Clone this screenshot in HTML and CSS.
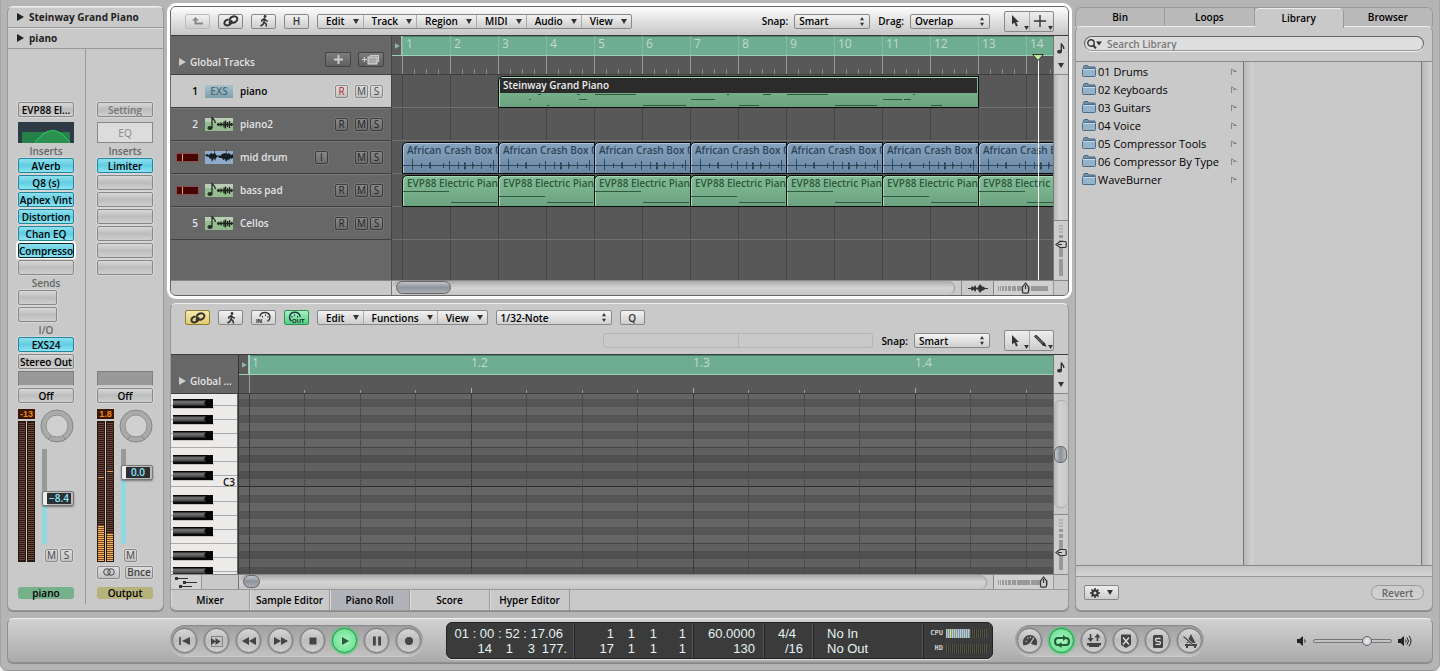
FILE: index.html
```html
<!DOCTYPE html>
<html lang="en">
<head>
<meta charset="utf-8">
<title>Arrange</title>
<link rel="stylesheet" href="styles.css">
</head>
<body>
<svg class="defs" aria-hidden="true">
  <symbol id="caret" viewBox="0 0 6 5"><path d="M0 0h6L3 5z" fill="#333"/></symbol>
  <symbol id="updown" viewBox="0 0 4 9"><path d="M0 3.2 2 0l2 3.2zM0 5.8 2 9l2-3.2z" fill="#333"/></symbol>
  <symbol id="tri" viewBox="0 0 7 8"><path d="M0 0l7 4-7 4z" fill="currentColor"/></symbol>
  <symbol id="link" viewBox="0 0 16 12"><g fill="none" stroke="currentColor" stroke-width="2"><ellipse cx="10.500" cy="4.500" rx="4" ry="3" transform="rotate(-25 10.500 4.500)"/><path d="M9 5.500 6 8.500M5.500 4.500C3 4.500 1.200 6.500 1.400 8.500s3 2.500 5.100 1.200 2.500-2.200 2.300-3.700"/></g></symbol>
  <symbol id="run" viewBox="0 0 10 12"><circle cx="6" cy="1.500" r="1.400" fill="#333"/><path d="M5.500 3.200 5 7.200M5.400 3.600 2.800 5.200v1.600M5.600 4l1.800 1.700 1.600.2M5 7l-1 2.400L1.500 11M5 7l2 1.900.5 2.600" fill="none" stroke="#333" stroke-width="1.500"/></symbol>
  <symbol id="note" viewBox="0 0 8 11"><ellipse cx="2.500" cy="8.700" rx="2.400" ry="1.900" fill="#333"/><path d="M4.300 8.700V.5c.4 2 3 2.700 2.500 5.500" fill="none" stroke="#333" stroke-width="1.400"/></symbol>
  <symbol id="pointer" viewBox="0 0 9 12"><path d="M1 0v9.500l2.300-2L5 11.500l1.800-.8L5.200 7H8z" fill="#333"/></symbol>
  <symbol id="miditrack" viewBox="0 0 28 16">
    <rect y="2" width="28" height="13" fill="#95bc91"/><rect y="2" width="28" height="4" fill="#b8cdb4"/>
    <path d="M7 12V1c.8 2.500 3.500 3 3.400 6" fill="none" stroke="#233023" stroke-width="1.300"/><ellipse cx="5" cy="12" rx="2.600" ry="2" fill="#233023"/>
    <path d="M12 8.500h16M13.500 7v3M16 6.500v4M19 5.500v6M20.500 4.500v8M22.500 6v5M24.500 5v7M26.500 7v3" stroke="#1c241c" stroke-width="1.300"/>
  </symbol>
  <symbol id="audiotrack" viewBox="0 0 28 16">
    <rect y="2" width="28" height="13" fill="#8fadca"/>
    <path d="M9.500 0v6M21.500 0v6" stroke="#555"/>
    <path d="M0 6l2-1 2 1 2-2 2 1 2-1 2 3 1-1 2 1 2-2 3-1 2 1 2-1 2 2 2-1v4l-2 1-1-1-1 3-1-2-2 3-1-3-2 1-1-2-3 0-1-2-2 2-1 3-1-3-2 4-1-4-1 1-2-3-1 1z" fill="#151c24"/>
  </symbol>
  <symbol id="drumwave" viewBox="0 0 94 16"><path d="M0 8.500h94M9.500 2v11M18.500 6v5M27.500 5v7M26.500 6v5M40.500 6v5M46.500 4v9M55.500 5v7M61.500 5v8M62.500 6v6M69.500 5v7M70.500 7v3M78.500 5v7M87.500 7v4M90.500 3v10" stroke="#34485c" fill="none"/></symbol>
  <symbol id="bassA" viewBox="0 0 94 16"><path d="M0 1.500h46M48 12.500h46" stroke="#2f5a40"/></symbol>
  <symbol id="bassB" viewBox="0 0 94 16"><path d="M0 6.500h46M48 12.500h46" stroke="#2f5a40"/></symbol>
  <symbol id="vzoom" viewBox="0 0 13 52">
    <path d="M5 1h4M5 4h4M5 7h4" stroke="#999" stroke-width="1"/><path d="M5 10h4v3H5zM5 15h4v4H5zM5 21h4v11H5zM5 34h4v17H5z" fill="#999"/></symbol>
  <symbol id="vthumb" viewBox="0 0 12 9"><path d="M1 4.500 5 1.500h5q1.200 0 1.200 1.200v3.600q0 1.200-1.200 1.200H5zM3 4.500h4" fill="#ccc" stroke="#333" stroke-width="1.200"/></symbol>
  <symbol id="hzoom" viewBox="0 0 50 5"><path d="M.5 0v5M2.500 0v5" stroke="#999"/><path d="M4 0h2v5H4zM7 0h2v5H7zM10 0h3v5h-3zM14 0h4v5h-4zM19 0h13v5H19zM33 0h17v5H33z" fill="#999"/></symbol>
  <symbol id="hthumb" viewBox="0 0 9 12"><path d="M4.500 1 1.500 5v5q0 1.200 1.200 1.200h3.600q1.200 0 1.200-1.200V5zM4.500 3v4" fill="#ccc" stroke="#333" stroke-width="1.200"/></symbol>
  <symbol id="folder" viewBox="0 0 14 12"><path d="M1.500 2.500V1.300L2.300.5h3.400l1 1.500H13v2H1.500z" fill="#6f93ad" stroke="#47677f"/><rect x=".5" y="3.500" width="13" height="8" rx="1" fill="#93b4ca" stroke="#4d6c85"/><path d="M1 4.500h12" stroke="#c4dae6"/></symbol>
  <symbol id="flag" viewBox="0 0 6 7"><path d="M.5 7V1L5.500 3.500H2" fill="none" stroke="#888"/></symbol>
</svg>

<div class="app">
  <div class="workspace">

    <aside class="strip panel">
      <button class="strip-head"><svg width="7" height="8"><use href="#tri"/></svg>Steinway Grand Piano</button>
      <button class="strip-head"><svg width="7" height="8"><use href="#tri"/></svg>piano</button>
      <div class="channels">
        <section class="channel">
          <button class="slot">EVP88 El...</button>
          <svg class="eq" viewBox="0 0 56 21" width="56" height="21"><rect width="56" height="21" fill="#303b48"/><rect x="4" y="10" width="48" height="11" fill="#26804a"/><path d="M17 21C27 6 40 3 52 21" fill="#2b9150" stroke="#32d162"/></svg>
          <h3>Inserts</h3>
          <div class="slots">
            <button class="slot on">AVerb</button><button class="slot on">Q8 (s)</button><button class="slot on">Aphex Vint</button><button class="slot on">Distortion</button><button class="slot on">Chan EQ</button><button class="slot on focus">Compresso</button><button class="slot" aria-label="Empty insert"></button>
          </div>
          <h3>Sends</h3>
          <div class="slots half"><button class="slot" aria-label="Send 1"></button><button class="slot" aria-label="Send 2"></button></div>
          <h3>I/O</h3>
          <div class="slots"><button class="slot on">EXS24</button><button class="slot">Stereo Out</button></div>
          <div class="lower">
            <div class="group"></div>
            <button class="slot">Off</button>
            <div class="levels">
              <div class="meters"><output class="peak">-13</output><div class="bars"><i></i><i></i></div></div>
              <div class="level-side">
                <svg class="knob" width="34" height="34" viewBox="0 0 34 34"><circle cx="17" cy="17" r="16" fill="#aaa" stroke="#858585"/><circle cx="17" cy="17" r="11" fill="#d0d0d0" stroke="#909090"/><path d="M11 27l-3 4M23 27l3 4" stroke="#858585"/></svg>
                <div class="fader" style="--v:47"><input type="range" min="0" max="100" value="47" aria-label="piano volume"><output>−8.4</output></div>
                <div class="ms"><button class="mini light">M</button><button class="mini light">S</button></div>
              </div>
            </div>
            <div class="out-row"></div>
            <div class="name green">piano</div>
          </div>
        </section>
        <section class="channel">
          <button class="slot dim">Setting</button>
          <button class="eq-off">EQ</button>
          <h3>Inserts</h3>
          <div class="slots">
            <button class="slot on">Limiter</button><button class="slot" aria-label="Empty insert"></button><button class="slot" aria-label="Empty insert"></button><button class="slot" aria-label="Empty insert"></button><button class="slot" aria-label="Empty insert"></button><button class="slot" aria-label="Empty insert"></button><button class="slot" aria-label="Empty insert"></button>
          </div>
          <div class="lower">
            <div class="group"></div>
            <button class="slot">Off</button>
            <div class="levels">
              <div class="meters"><output class="peak">1.8</output><div class="bars"><i class="lit-a"></i><i class="lit-b"></i></div></div>
              <div class="level-side">
                <svg class="knob" width="34" height="34" viewBox="0 0 34 34"><circle cx="17" cy="17" r="16" fill="#aaa" stroke="#858585"/><circle cx="17" cy="17" r="11" fill="#d0d0d0" stroke="#909090"/><path d="M11 27l-3 4M23 27l3 4" stroke="#858585"/></svg>
                <div class="fader" style="--v:80"><input type="range" min="0" max="100" value="80" aria-label="Output volume"><output>0.0</output></div>
                <div class="ms"><button class="mini light">M</button></div>
              </div>
            </div>
            <div class="out-row"><button class="mini light wide" aria-label="Stereo"><svg width="12" height="8" viewBox="0 0 12 8" fill="none" stroke="#444"><circle cx="4" cy="4" r="3.300"/><circle cx="8" cy="4" r="3.300"/></svg></button><button class="mini light bnce">Bnce</button></div>
            <div class="name olive">Output</div>
          </div>
        </section>
      </div>
    </aside>

    <main class="center">
      <section class="arrange">
        <div class="toolbar">
          <button class="tool faded" aria-label="Up"><svg width="11" height="9" viewBox="0 0 11 9"><path d="M3.500 7.500H11v-2H4.500v-2H7L3.500 0 0 3.500h2.500v4z" fill="#888"/></svg></button>
          <button class="tool" aria-label="Link"><svg width="16" height="12"><use href="#link"/></svg></button>
          <button class="tool" aria-label="Catch"><svg width="10" height="12"><use href="#run"/></svg></button>
          <button class="tool">H</button>
          <div class="menus">
            <button>Edit<svg width="6" height="5"><use href="#caret"/></svg></button><button>Track<svg width="6" height="5"><use href="#caret"/></svg></button><button>Region<svg width="6" height="5"><use href="#caret"/></svg></button><button>MIDI<svg width="6" height="5"><use href="#caret"/></svg></button><button>Audio<svg width="6" height="5"><use href="#caret"/></svg></button><button>View<svg width="6" height="5"><use href="#caret"/></svg></button>
          </div>
          <div class="right-tools">
            <label for="snap">Snap:</label><span class="pick w76"><select id="snap"><option>Smart</option></select><svg width="4" height="9"><use href="#updown"/></svg></span>
            <label for="drag">Drag:</label><span class="pick w80"><select id="drag"><option>Overlap</option></select><svg width="4" height="9"><use href="#updown"/></svg></span>
            <div class="pointer-tools"><button aria-label="Pointer tool"><svg width="9" height="12"><use href="#pointer"/></svg><svg class="drop" width="5" height="4"><use href="#caret"/></svg></button><button aria-label="Marquee tool"><svg width="12" height="12" viewBox="0 0 12 12"><path d="M6 0v12M0 6h12" stroke="#333" stroke-width="1.400"/></svg><svg class="drop" width="5" height="4"><use href="#caret"/></svg></button></div>
          </div>
        </div>

        <div class="arrange-grid">
          <div class="headers">
            <div class="global">
              <svg width="7" height="8"><use href="#tri"/></svg><span>Global Tracks</span>
              <button aria-label="Add track"><svg width="9" height="9" viewBox="0 0 9 9"><path d="M4.500 0v9M0 4.500h9" stroke="#ccc" stroke-width="2"/></svg></button>
              <button aria-label="Duplicate track"><svg width="18" height="11" viewBox="0 0 18 11"><path d="M0 5.500h5M2.500 3v5M8.500 2.500v-1h8v6h-1" stroke="#ccc" fill="none" stroke-width="1.200"/><rect x="6" y="3" width="9" height="7" fill="#aaa" stroke="#ddd"/></svg></button>
            </div>
            <div class="track selected"><span class="num">1</span><span class="exs">EXS</span><span class="tname">piano</span><span></span><button class="mini m rec">R</button><button class="mini m">M</button><button class="mini">S</button></div>
            <div class="track"><span class="num">2</span><svg width="28" height="16"><use href="#miditrack"/></svg><span class="tname">piano2</span><span></span><button class="mini m">R</button><button class="mini m">M</button><button class="mini">S</button></div>
            <div class="track"><span class="clip"></span><svg width="28" height="16"><use href="#audiotrack"/></svg><span class="tname">mid drum</span><button class="mini">I</button><span></span><button class="mini m">M</button><button class="mini">S</button></div>
            <div class="track"><span class="clip"></span><svg width="28" height="16"><use href="#miditrack"/></svg><span class="tname">bass pad</span><span></span><button class="mini m">R</button><button class="mini m">M</button><button class="mini">S</button></div>
            <div class="track"><span class="num">5</span><svg width="28" height="16"><use href="#miditrack"/></svg><span class="tname">Cellos</span><span></span><button class="mini m">R</button><button class="mini m">M</button><button class="mini">S</button></div>
          </div>
          <div class="timeline">
            <div class="ruler">
              <div class="cycle"><span class="start"><svg width="5" height="8"><use href="#tri"/></svg></span><span>1</span><span>2</span><span>3</span><span>4</span><span>5</span><span>6</span><span>7</span><span>8</span><span>9</span><span>10</span><span>11</span><span>12</span><span>13</span><span>14</span></div>
              <div class="ticks"></div>
            </div>
            <div class="lanes">
              <div class="lane"><div class="region piano"><b>Steinway Grand Piano</b><svg width="479" height="14" viewBox="0 0 479 14"><path d="M39 1.500h3M78 1.500h3M96 1.500h41M228 1.500h2M264 1.500h8M288 1.500h41M414 1.500h2M30 6.500h2M80 6.500h8M192 6.500h24M384 6.500h19M405 6.500h7M48 12.500h2M144 12.500h43M240 12.500h20M336 12.500h42M432 12.500h11" stroke="#2f5a40"/></svg></div></div>
              <div class="lane"></div>
              <div class="lane">
                <div class="region blue"><span>African Crash Box 0</span><svg width="94" height="16"><use href="#drumwave"/></svg></div><div class="region blue"><span>African Crash Box 0</span><svg width="94" height="16"><use href="#drumwave"/></svg></div><div class="region blue"><span>African Crash Box 0</span><svg width="94" height="16"><use href="#drumwave"/></svg></div><div class="region blue"><span>African Crash Box 0</span><svg width="94" height="16"><use href="#drumwave"/></svg></div><div class="region blue"><span>African Crash Box 0</span><svg width="94" height="16"><use href="#drumwave"/></svg></div><div class="region blue"><span>African Crash Box 0</span><svg width="94" height="16"><use href="#drumwave"/></svg></div><div class="region blue"><span>African Crash Box 0</span><svg width="94" height="16"><use href="#drumwave"/></svg></div>
              </div>
              <div class="lane">
                <div class="region"><span>EVP88 Electric Piano</span><svg width="94" height="16"><use href="#bassA"/></svg></div><div class="region"><span>EVP88 Electric Piano</span><svg width="94" height="16"><use href="#bassB"/></svg></div><div class="region"><span>EVP88 Electric Piano</span><svg width="94" height="16"><use href="#bassA"/></svg></div><div class="region"><span>EVP88 Electric Piano</span><svg width="94" height="16"><use href="#bassB"/></svg></div><div class="region"><span>EVP88 Electric Piano</span><svg width="94" height="16"><use href="#bassA"/></svg></div><div class="region"><span>EVP88 Electric Piano</span><svg width="94" height="16"><use href="#bassB"/></svg></div><div class="region"><span>EVP88 Electric Piano</span><svg width="94" height="16"><use href="#bassA"/></svg></div>
              </div>
              <div class="lane"></div>
            </div>
            <div class="playhead"><svg width="12" height="7" viewBox="0 0 12 7"><path d="M.5.5h11L6 6.500z" fill="#b7ee93" stroke="#333"/></svg></div>
          </div>
          <div class="side">
            <div class="side-menu"><svg width="8" height="11"><use href="#note"/></svg><svg width="6" height="5"><use href="#caret"/></svg></div>
            <div class="vscroll"></div>
            <div class="vzoom"><svg width="13" height="52"><use href="#vzoom"/></svg><svg class="vthumb a" width="12" height="9"><use href="#vthumb"/></svg><input type="range" aria-label="Vertical zoom"></div>
          </div>
          <div class="foot-left"></div>
          <div class="foot">
            <div class="hscroll"><i class="long"></i></div>
            <div class="wavecell"><svg width="20" height="11" viewBox="0 0 20 11"><path d="M0 5.500h20" stroke="#333"/><path d="M2.500 5.500 4 3l1.500 1.500L7 2l2 3.500L12 1l2 2.500 1 0 3 2-3 2h-1L12 10 9 5.500 7 9 5.500 6.500 4 8z" fill="#333"/></svg></div>
            <div class="hzoom"><svg width="50" height="5"><use href="#hzoom"/></svg><svg class="hthumb a" width="9" height="12"><use href="#hthumb"/></svg><input type="range" aria-label="Horizontal zoom"></div>
          </div>
          <div class="corner"></div>
        </div>
      </section>

      <section class="editor panel">
        <div class="etools">
          <div class="erow">
            <button class="tool yellow" aria-label="Link"><svg width="16" height="12"><use href="#link"/></svg></button>
            <button class="tool" aria-label="Catch"><svg width="10" height="12"><use href="#run"/></svg></button>
            <button class="tool" aria-label="MIDI in"><svg width="18" height="13" viewBox="0 0 18 13"><path d="M5 5.500C5.500 0 14.500 0 15 6c0 2-1 3.500-2.500 4.500" fill="none" stroke="#333" stroke-width="1.400"/><path d="M7.500 5v1.500M10.500 3.500V5M13 5v1.500" stroke="#333"/><text x="1" y="12">IN</text></svg></button>
            <button class="tool greenb" aria-label="MIDI out"><svg width="20" height="13" viewBox="0 0 20 13"><path d="M4.500 10C1 7.500 2.500 1.200 7.500 1.200c3.500 0 5.500 2 5.500 4.800" fill="none" stroke="#234" stroke-width="1.400"/><path d="M5 5v1.500M7.500 3.500V5M10.500 5v1.500" stroke="#234"/><text x="5" y="12">OUT</text></svg></button>
            <div class="menus">
              <button>Edit<svg width="6" height="5"><use href="#caret"/></svg></button><button>Functions<svg width="6" height="5"><use href="#caret"/></svg></button><button>View<svg width="6" height="5"><use href="#caret"/></svg></button>
            </div>
            <span class="pick w116"><select aria-label="Quantize"><option>1/32-Note</option></select><svg width="4" height="9"><use href="#updown"/></svg></span>
            <button class="tool">Q</button>
          </div>
          <div class="erow second">
            <div class="info"><i></i><i></i></div>
            <label for="snap2">Snap:</label><span class="pick w76"><select id="snap2"><option>Smart</option></select><svg width="4" height="9"><use href="#updown"/></svg></span>
            <div class="pointer-tools"><button aria-label="Pointer tool"><svg width="9" height="12"><use href="#pointer"/></svg><svg class="drop" width="5" height="4"><use href="#caret"/></svg></button><button aria-label="Pencil tool"><svg width="13" height="12" viewBox="0 0 13 12"><path d="M1 .5 10 9.500" stroke="#333" stroke-width="3"/><path d="M2 1.500 9 8.500" stroke="#888"/><path d="M8 10l2.500-2.500L12.500 12z" fill="#222"/></svg><svg class="drop" width="5" height="4"><use href="#caret"/></svg></button></div>
          </div>
        </div>
        <div class="roll">
          <div class="rollhead">
            <div class="global"><svg width="7" height="8"><use href="#tri"/></svg><span>Global ...</span></div>
            <svg class="keys" width="66" height="100%">
              <defs><linearGradient id="bk" x2="0" y2="1"><stop offset="0" stop-color="#222"/><stop offset=".3" stop-color="#777"/><stop offset=".8" stop-color="#4a4a4a"/><stop offset="1" stop-color="#111"/></linearGradient>
              <pattern id="oct" width="66" height="96" patternUnits="userSpaceOnUse" patternTransform="translate(1 -3)">
                <rect width="66" height="96" fill="#ecebe9"/>
                <path d="M0 14.500h66M0 28.500h66M0 42.500h66M0 56.500h66M0 70.500h66M0 84.500h66M0 95.500h66" stroke="#aaa"/>
                <path d="M1 16h41v2H1zM1 32h41v2H1zM1 48h41v2H1zM1 72h41v2H1zM1 88h41v2H1z" fill="#c4c3c1"/>
                <path d="M1 8h40v9H1zM1 24h40v9H1zM1 40h40v9H1zM1 64h40v9H1zM1 80h40v9H1z" fill="#080808"/>
                <g fill="url(#bk)"><rect x="1" y="9" width="33" height="6"/><rect x="1" y="25" width="33" height="6"/><rect x="1" y="41" width="33" height="6"/><rect x="1" y="65" width="33" height="6"/><rect x="1" y="81" width="33" height="6"/></g>
                <path d="M34 9l-2 3 2 3zM34 25l-2 3 2 3zM34 41l-2 3 2 3zM34 65l-2 3 2 3zM34 81l-2 3 2 3z" fill="#080808"/>
              </pattern></defs>
              <rect width="66" height="100%" fill="url(#oct)"/><text x="52" y="92">C3</text>
            </svg>
          </div>
          <div class="rollmain">
            <div class="ruler roll-ruler"><div class="cycle"><span class="start"><svg width="5" height="8"><use href="#tri"/></svg></span><span>1</span><span>1.2</span><span>1.3</span><span>1.4</span></div><div class="ticks"></div></div>
            <div class="notes"></div>
          </div>
          <div class="side">
            <div class="side-menu"><svg width="8" height="11"><use href="#note"/></svg><svg width="6" height="5"><use href="#caret"/></svg></div>
            <div class="vscroll"><i></i></div>
            <div class="vzoom"><svg width="13" height="52"><use href="#vzoom"/></svg><svg class="vthumb b" width="12" height="9"><use href="#vthumb"/></svg><input type="range" aria-label="Vertical zoom"></div>
          </div>
          <div class="foot-left"><button aria-label="Controllers"><svg width="22" height="11" viewBox="0 0 22 11"><path d="M0 1.500h13M8 5.500h14M4 9.500h13" stroke="#333" stroke-width="1.200"/><path d="M0 0h3v3H0zM8 4h3v3H8zM4 8h3v3H4z" fill="#333"/></svg></button></div>
          <div class="foot">
            <div class="hscroll"><i class="round"></i></div>
            <div class="hzoom"><svg width="50" height="5"><use href="#hzoom"/></svg><svg class="hthumb b" width="9" height="12"><use href="#hthumb"/></svg><input type="range" aria-label="Horizontal zoom"></div>
          </div>
          <div class="corner"></div>
        </div>
        <nav class="etabs"><button>Mixer</button><button>Sample Editor</button><button class="active">Piano Roll</button><button>Score</button><button>Hyper Editor</button></nav>
      </section>
    </main>

    <aside class="library">
      <nav class="ltabs"><button>Bin</button><button>Loops</button><button class="active">Library</button><button>Browser</button></nav>
      <div class="lbody">
        <div class="lsearch"><label for="search" aria-label="Search"><svg width="15" height="10" viewBox="0 0 15 10"><circle cx="4" cy="4" r="3.200" fill="none" stroke="#333" stroke-width="1.400"/><path d="M6.300 6.300 9 9.500" stroke="#333" stroke-width="2"/><path d="M9 2.500h6L12 6.500z" fill="#333"/></svg></label><input id="search" type="text" placeholder="Search Library"></div>
        <div class="lcols">
          <ul>
            <li><svg width="14" height="12"><use href="#folder"/></svg>01 Drums<svg class="flag" width="6" height="7"><use href="#flag"/></svg></li>
            <li><svg width="14" height="12"><use href="#folder"/></svg>02 Keyboards<svg class="flag" width="6" height="7"><use href="#flag"/></svg></li>
            <li><svg width="14" height="12"><use href="#folder"/></svg>03 Guitars<svg class="flag" width="6" height="7"><use href="#flag"/></svg></li>
            <li><svg width="14" height="12"><use href="#folder"/></svg>04 Voice<svg class="flag" width="6" height="7"><use href="#flag"/></svg></li>
            <li><svg width="14" height="12"><use href="#folder"/></svg>05 Compressor Tools<svg class="flag" width="6" height="7"><use href="#flag"/></svg></li>
            <li><svg width="14" height="12"><use href="#folder"/></svg>06 Compressor By Type<svg class="flag" width="6" height="7"><use href="#flag"/></svg></li>
            <li><svg width="14" height="12"><use href="#folder"/></svg>WaveBurner<svg class="flag" width="6" height="7"><use href="#flag"/></svg></li>
          </ul>
          <div class="gutter"></div><div></div><div class="gutter"></div>
        </div>
        <div class="lstrip"></div>
        <div class="lfoot"><button class="gear" aria-label="Actions"><svg width="10" height="10" viewBox="0 0 10 10"><circle cx="5" cy="5" r="2.500" fill="none" stroke="#333" stroke-width="2"/><path d="M5 0v2M5 8v2M0 5h2M8 5h2M1.500 1.500l1.400 1.400M7.100 7.100l1.400 1.400M8.500 1.500 7.100 2.900M2.900 7.100 1.500 8.500" stroke="#333" stroke-width="1.500"/></svg><svg width="6" height="5"><use href="#caret"/></svg></button><button class="revert">Revert</button></div>
      </div>
    </aside>
  </div>

  <footer class="transport">
    <div class="pill">
      <button aria-label="Go to beginning"><svg viewBox="0 0 16 16"><path d="M3 4v8" stroke="#444" stroke-width="1.500"/><path d="M13 4v8L5 8z" fill="#444"/></svg></button>
      <button aria-label="Play from selection"><svg viewBox="0 0 16 16"><path d="M2.500 3.500h11v10h-11z" fill="none" stroke="#444" stroke-dasharray="1 1"/><path d="M2 5v7l5-3.500zM6.500 5v7l5-3.500z" fill="#444"/></svg></button>
      <button aria-label="Rewind"><svg viewBox="0 0 16 16"><path d="M8 4v8L1 8zM15 4v8L8 8z" fill="#444"/></svg></button>
      <button aria-label="Forward"><svg viewBox="0 0 16 16"><path d="M1 4v8l7-4zM8 4v8l7-4z" fill="#444"/></svg></button>
      <button aria-label="Stop"><svg viewBox="0 0 16 16"><path d="M4.500 4.500h7v7h-7z" fill="#444"/></svg></button>
      <button class="lit" aria-label="Play"><svg viewBox="0 0 16 16"><path d="M5 4v8l7-4z" fill="#2a5b3c"/></svg></button>
      <button aria-label="Pause"><svg viewBox="0 0 16 16"><path d="M4 3.500h2.800v9H4zM9.200 3.500H12v9H9.200z" fill="#444"/></svg></button>
      <button aria-label="Record"><svg viewBox="0 0 16 16"><circle cx="8" cy="8" r="4" fill="#444"/></svg></button>
    </div>
    <div class="lcd">
      <div class="cell time"><span class="full">01 : 00 : 52 : 17.06</span><span>14</span><span>1</span><span>3</span><span>177.</span></div>
      <div class="cell locs"><span>1</span><span>1</span><span>1</span><span>1</span><span>17</span><span>1</span><span>1</span><span>1</span></div>
      <div class="cell tempo"><span>60.0000</span><span>130</span></div>
      <div class="cell sig"><span>4/4</span><span>/16</span></div>
      <div class="cell io"><span>No In</span><span>No Out</span></div>
      <div class="cell load"><span>CPU</span><i class="cpu"></i><span>HD</span><i></i></div>
    </div>
    <div class="pill">
      <button aria-label="Low latency"><svg viewBox="0 0 16 16"><path d="M1.500 12.500C-.5 7 3 2 8 2s8.500 5 6.500 10.500l-4-1Q8 9 5.500 11.500z" fill="#444"/><path d="M8 11l4-6.500M3.500 8l1.500.5M5.500 4.500l.8 1.300M8.500 3.500V5" stroke="#ccc" stroke-width="1.200"/></svg></button>
      <button class="lit" aria-label="Cycle"><svg viewBox="0 0 16 16"><path d="M6 12H4q-3 0-3-3.500T4 5h6M10 12h2q3 0 3-3.500T12 5M6 12h5" fill="none" stroke="#235b38" stroke-width="2"/><path d="M9 2l4 3-4 3zM7.500 9l-4 3 4 3z" fill="#235b38"/></svg></button>
      <button aria-label="Autopunch"><svg viewBox="0 0 16 16"><path d="M4.500 1v5M11.500 8V3" stroke="#444" stroke-width="1.600"/><path d="M1.500 5h6l-3 4zM8.500 4.500h6l-3-4zM1 10h14v2.500h-2V14H3v-1.500H1z" fill="#444"/></svg></button>
      <button aria-label="Replace"><svg viewBox="0 0 16 16"><path d="M4 1.500h8q1 0 1 1V11q0 1-1 1.500L8 15l-4-2.500Q3 12 3 11V2.500q0-1 1-1z" fill="#444"/><path d="M5 4.500l6 7M11 4.500l-6 7" stroke="#ddd" stroke-width="1.400"/></svg></button>
      <button aria-label="Solo"><svg viewBox="0 0 16 16"><rect x="3" y="2" width="10" height="13" rx="1.500" fill="#444"/><path d="M10.500 5.500h-4q-1 0-1 1.200t1 1.600l3 .4q1 .2 1 1.300t-1 1.300h-4" fill="none" stroke="#ddd" stroke-width="1.300"/></svg></button>
      <button aria-label="Metronome"><svg viewBox="0 0 16 16"><path d="M9 1l4.500 9h-9zM3 11h12v2H3zM4 13h2v2H4zM12 13h2v2h-2z" fill="#444"/><path d="M1.500 3.500 10 11" stroke="#ccc" stroke-width="2.400"/><path d="M1.500 3.500 10 11" stroke="#444" stroke-width="1.200"/></svg></button>
    </div>
    <div class="volume">
      <svg width="10" height="10" viewBox="0 0 10 10"><path d="M0 3h2.500L6 0v10L2.500 7H0z" fill="#222"/><path d="M7.500 3.500q1.500 1.500 0 3" fill="none" stroke="#222"/></svg>
      <input type="range" min="0" max="100" value="71" aria-label="Master volume">
      <svg width="14" height="12" viewBox="0 0 14 12"><path d="M0 4h2.500L6 1v10L2.500 8H0z" fill="#222"/><path d="M7.500 4.500q1.500 1.500 0 3M9 2.500q3 3.500 0 7M11 .8q4 5.200 0 10.400" fill="none" stroke="#222"/></svg>
    </div>
  </footer>
</div>
</body>
</html>
```
FILE: styles.css
```css
* { box-sizing: border-box; }
body, h3, ul { margin: 0; padding: 0; }
body {
  background: #eee;
  font: 600 10px/12px "Open Sans", "Noto Sans", sans-serif;
  color: #000;
}
button, input, select {
  font: inherit; color: inherit; margin: 0; padding: 0;
  border: 0; background: none; border-radius: 0;
}
button { display: flex; align-items: center; justify-content: center; white-space: nowrap; overflow: hidden; }
svg { display: block; flex: none; }
.defs { position: absolute; width: 0; height: 0; }

.app {
  min-height: 100vh; display: flex; flex-direction: column; gap: 7px;
  padding: 6px 7px 8px;
  background: #b5b5b5; border-radius: 0 0 8px 8px;
  box-shadow: inset 0 -1px #999, inset 1px 0 #a5a5a5, inset -1px 0 #a5a5a5;
}
.workspace { flex: 1; display: flex; min-width: 0; }
.panel { background: #c9c9c9; border: 1px solid #999; border-top-color: #eee; border-radius: 6px; overflow: hidden; box-shadow: 0 1px #888; }

/* channel strips */
.strip { width: 157px; flex: none; margin-right: 6px; display: flex; flex-direction: column; }
.strip-head { height: 21px; justify-content: flex-start; gap: 5px; padding-left: 9px; color: #222; font-weight: 700; border-bottom: 1px solid #999; box-shadow: inset 0 1px #ddd; }
.channels { flex: 1; display: flex; }
.channel { width: 77px; display: flex; flex-direction: column; padding: 53px 11px 11px 10px; }
.channel + .channel { width: 78px; padding: 53px 10px 5px 11px; border-left: 1px solid #999; margin-bottom: 6px; }
.channel h3 { font-size: 10px; font-weight: 600; line-height: 14px; color: #666; text-align: center; }
.slot {
  width: 100%; height: 15px; flex: none; line-height: 12px; border: 1px solid #888; border-radius: 2px;
  background: linear-gradient(#d8d8d8, #bdbdbd 50%, #cfcfcf); box-shadow: 0 0 0 1px #d6d6d6;
}
.slots { display: flex; flex-direction: column; gap: 2px; margin: 0 0 1px; }
.slots.half { width: 39px; }
.slot.on { background: linear-gradient(#8fe0ee, #60cde2 50%, #8be4f2); border-color: #22859b; }
.slot.on.focus { border-color: #123; box-shadow: 0 0 0 2px #fff; }
.slot.dim { color: #777; }
.eq, .eq-off { width: 100%; height: 21px; margin: 5px 0 1px; }
.eq-off { border: 1px solid #888; background: #dcdcdc; color: #888; font-weight: 400; }
.lower { margin-top: auto; display: flex; flex-direction: column; }
.group { height: 15px; background: #999; border: 1px solid #808080; border-bottom-color: #ccc; margin-bottom: 2px; }
.levels { display: flex; margin-top: 6px; height: 153px; }
.meters { width: 17px; display: flex; flex-direction: column; gap: 2px; }
.peak { height: 10px; background: #3b1602; color: #f08a10; font: 700 9px/10px "Liberation Sans", sans-serif; text-align: center; }
.bars { flex: 1; display: flex; gap: 1px; }
.bars i { flex: 1; border: 1px solid #2a1710; background: repeating-linear-gradient(#2c1a14 0 1px, #6a463a 1px 2px); }
.bars .lit-a { background: linear-gradient(#f0a050, #f0a050) 0 55px / 100% 1px no-repeat, repeating-linear-gradient(#7a4a1c 0 1px, #f2b366 1px 2px) 0 100% / 100% 36px no-repeat, repeating-linear-gradient(#2c1a14 0 1px, #6a463a 1px 2px); }
.bars .lit-b { background: linear-gradient(#f0a050, #f0a050) 0 49px / 100% 1px no-repeat, repeating-linear-gradient(#7a4a1c 0 1px, #f2b366 1px 2px) 0 100% / 100% 28px no-repeat, repeating-linear-gradient(#2c1a14 0 1px, #6a463a 1px 2px); }
.level-side { flex: 1; display: flex; flex-direction: column; align-items: flex-end; }
.fader { position: relative; width: 32px; height: 95px; margin-top: 6px; }
.fader input {
  display: block; appearance: none; writing-mode: vertical-lr; direction: rtl; width: 32px; height: 95px;
  background: linear-gradient(#999 calc((100 - var(--v)) * 1%), #8fd9e2 0) 0 0 / 5px 100% no-repeat;
}
.fader input::-webkit-slider-thumb { appearance: none; width: 32px; height: 15px; border: 1px solid #777; border-radius: 2px; background: linear-gradient(90deg, #eee 4px, #bbb 5px); box-shadow: 0 1px 2px #777; }
.fader output { position: absolute; right: 3px; top: calc((100 - var(--v)) * .8px + 2px); width: 24px; height: 11px; background: #2b2f32; color: #8fe6f8; line-height: 11px; text-align: center; pointer-events: none; }
.ms { display: flex; gap: 2px; width: 29px; margin-top: 5px; }
.out-row { height: 20px; display: flex; justify-content: space-between; align-items: center; padding-top: 0; }
.name { height: 12px; margin-top: 5px; border-radius: 3px; text-align: center; line-height: 12px; }
.green { background: #77b18c; }
.olive { background: #b6b27c; }

.mini { width: 13px; height: 13px; font: 400 10px/11px "Open Sans", sans-serif; border: 1px solid #3c3c3c; border-radius: 2px; background: linear-gradient(#888, #6c6c6c); box-shadow: 0 0 0 1px #757575; color: #222; }
.mini.light, .selected .mini { background: linear-gradient(#ddd, #c2c2c2); border-color: #888; box-shadow: 0 0 0 1px #d5d5d5; color: #444; }
.mini.wide { width: 23px; }
.mini.bnce { width: 28px; font-weight: 600; }
.selected .mini.rec { color: #b22; }

/* toolbars */
.center { flex: 1; min-width: 0; display: flex; flex-direction: column; gap: 7px; margin-right: 6px; }
.arrange { height: 290px; flex: none; display: flex; flex-direction: column; border: 1px solid #666; border-radius: 6px; box-shadow: 0 0 0 3px #fff; background: #c9c9c9; overflow: hidden; }
.toolbar { height: 28px; display: flex; align-items: center; gap: 8px; padding: 0 14px; background: linear-gradient(#fdfdfd, #c6c6c6); }
.tool { width: 25px; height: 15px; flex: none; border: 1px solid #888; border-radius: 2px; background: linear-gradient(#f2f2f2, #cdcdcd); color: #333; }
.tool.faded { border-color: #bbb; }
.tool text { font: 700 6px "Liberation Sans", sans-serif; fill: #222; }
.tool.yellow { background: linear-gradient(#f6e9ae, #e2cb6b); border-color: #8f7c35; }
.tool.greenb { background: linear-gradient(#a5f3c0, #51cf83); border-color: #2e8c54; }
.menus { display: flex; border: 1px solid #888; border-radius: 2px; height: 15px; background: linear-gradient(#f2f2f2, #cdcdcd); }
.menus button { gap: 8px; padding: 0 4px 0 8px; }
.menus button + button { border-left: 1px solid #aaa; }
.right-tools { margin-left: auto; display: flex; align-items: center; gap: 6px; }
.right-tools .pick + label { margin-left: 2px; }
.pick { position: relative; display: block; height: 15px; }
.pick select { display: block; appearance: none; width: 100%; height: 15px; line-height: 12px; padding-left: 4px; border: 1px solid #888; border-radius: 2px; background: linear-gradient(#f4f4f4, #cfcfcf); color: #000; }
.pick svg { position: absolute; right: 6px; top: 3px; pointer-events: none; }
.w76 { width: 76px; }
.w80 { width: 80px; }
.w116 { width: 116px; }
.pointer-tools { display: flex; height: 21px; border: 1px solid #888; border-radius: 2px; margin-left: 8px; background: linear-gradient(#eee, #ccc); }
.pointer-tools button { position: relative; width: 24px; padding-right: 3px; }
.pointer-tools button + button { border-left: 1px solid #aaa; width: 24px; }
.drop { position: absolute; right: 0; bottom: 1px; }

/* arrange area */
.arrange-grid { flex: 1; min-height: 0; display: grid; grid-template-columns: 221px minmax(0, 1fr) 15px; grid-template-rows: minmax(0, 1fr) 15px; border-top: 1px solid #3c3c3c; }
.headers { background: #676767; border-right: 1px solid #444; color: #e4e4e4; }
.global { height: 39px; display: flex; align-items: flex-end; gap: 4px; padding: 0 7px 6px 8px; color: #e4e4e4; border-bottom: 1px solid #3f3f3f; white-space: nowrap; }
.global > svg { margin-bottom: 2px; color: #ccc; }
.global button { width: 26px; height: 15px; margin: 0 0 1px auto; border: 1px solid #444; border-radius: 2px; background: linear-gradient(#7d7d7d, #606060); }
.global button + button { margin-left: 3px; }
.track { height: 33px; display: grid; grid-template-columns: 28px 28px 1fr 13px 18px 18px 13px; column-gap: 2px; align-items: center; padding: 0 8px 0 4px; border-bottom: 1px solid #3f3f3f; box-shadow: inset 0 1px #777; }
.track .mini.m { justify-self: end; }
.num { padding-right: 5px; text-align: right; }
.track .tname { padding-left: 5px; }
.track.selected { background: #c9c9c9; color: #000; box-shadow: none; }
.exs { height: 13px; background: linear-gradient(#a9c3cc, #7c9fad); color: #4c6b7b; text-align: center; font-weight: 600; }
.clip { width: 23px; height: 9px; margin-left: 1px; border: 1px solid #8a5050; background: linear-gradient(#f3a060, #f3a060) 5px 0 / 1px 100% no-repeat, #470604; }
.timeline { position: relative; overflow: hidden; background: #585858; display: flex; flex-direction: column; }
.ruler { height: 39px; flex: none; border-bottom: 1px solid #3f3f3f; }
.cycle { height: 20px; display: flex; background: #6fad92; border-bottom: 1px solid #9dd0b6; box-shadow: inset 0 1px #4a8069; font: 400 12px/15px "Open Sans", sans-serif; color: #c0d9cb; overflow: hidden; }
.cycle span { width: 48px; flex: none; padding-left: 3px; border-left: 1px solid #86bba3; }
.cycle .start { width: 10px; padding: 6px 0 0 3px; border: 0; border-right: 1px solid #bbb; background: #5b5b5b; color: #8eb7a5; }
.ticks { height: 18px; background:
  repeating-linear-gradient(90deg, #999 0 1px, transparent 1px 48px) 10px 0 no-repeat,
  repeating-linear-gradient(90deg, #888 0 1px, transparent 1px 12px) 10px 100% / 100% 5px no-repeat; }
.lanes { flex: 1; background: repeating-linear-gradient(90deg, #454545 0 1px, transparent 1px 48px) 10px 0 no-repeat; }
.lane { height: 33px; display: flex; padding: 1px 0 0 10px; border-bottom: 1px solid #707070; }
.region { width: 97px; margin-right: -1px; height: 32px; flex: none; border: 1px solid #0c0c0c; border-radius: 5px 0 0 0; background: linear-gradient(#84bd98, #6ba27f); box-shadow: inset 1px 1px #a5d8b6; overflow: hidden; color: #2d5740; font-weight: 600; }
.region span { display: block; height: 14px; line-height: 15px; padding-left: 4px; white-space: nowrap; overflow: hidden; }
.region.blue { background: linear-gradient(#86a3be, #6a88a4); box-shadow: inset 1px 1px #a9c4dc; color: #2f4356; }
.region.piano { width: 481px; margin-left: 96px; color: #eee; }
.region b { display: block; height: 15px; line-height: 15px; margin: 1px 1px 0; padding-left: 3px; background: #2b2b2b; font-weight: 600; }
.playhead { position: absolute; left: 646px; top: 18px; bottom: 0; width: 1px; background: #fff; }
.playhead svg { position: relative; left: -6px; }

.side { display: flex; flex-direction: column; border-left: 1px solid #777; background: #c9c9c9; }
.side-menu { height: 39px; display: flex; flex-direction: column; align-items: center; justify-content: space-between; padding: 7px 0 6px; border-bottom: 1px solid #888; background: #d0d0d0; }
.vscroll { flex: 1; background: linear-gradient(90deg, #b4b4b4, #d2d2d2 40%, #c8c8c8); display: flex; align-items: center; }
.roll .vscroll { margin: 6px 0; border: 1px solid #aaa; border-width: 1px 0; border-radius: 7px; }
.vscroll i { width: 13px; height: 17px; border: 1px solid #666; border-radius: 6px; background: linear-gradient(90deg, #c6c9cc, #8c9299 50%, #b4b8bc); }
.vzoom { position: relative; height: 60px; padding: 4px 0; border-top: 1px solid #888; background: #ccc; }
.vthumb { position: absolute; left: 1px; }
.vthumb.a { top: 19px; }
.vthumb.b { top: 33px; }
.vzoom input, .hzoom input { position: absolute; inset: 0; width: 100%; height: 100%; opacity: 0; }
.foot-left, .foot, .corner { border-top: 1px solid #888; background: #c9c9c9; display: flex; }
.foot-left { border-right: 1px solid #777; }
.corner { border-left: 1px solid #999; }
.hscroll { flex: 1; margin-right: 6px; background: linear-gradient(#aaa, #d4d4d4 50%, #c6c6c6); border-radius: 7px; border-right: 1px solid #999; }
.hscroll i { display: block; height: 13px; border: 1px solid #666; border-radius: 7px; background: linear-gradient(#bfc3c8, #8f959c 50%, #a8adb3); }
.hscroll .long { width: 55px; margin-left: 4px; }
.hscroll .round { width: 17px; margin-left: 4px; }
.wavecell { width: 32px; display: grid; place-items: center; border-left: 1px solid #888; }
.hzoom { position: relative; width: 60px; padding: 5px 4px; border-left: 1px solid #888; background: #d0d0d0; }
.hthumb { position: absolute; top: 1px; }
.hthumb.a { left: 27px; }
.hthumb.b { left: 45px; }

/* piano roll */
.editor { flex: 1; min-height: 0; display: flex; flex-direction: column; }
.etools { height: 50px; padding: 6px 14px 0; }
.erow { display: flex; gap: 8px; align-items: center; height: 15px; }
.erow.second { height: 21px; margin-top: 5px; justify-content: flex-end; gap: 6px; }
.info { width: 270px; height: 15px; margin-right: 2px; display: flex; border: 1px solid #b5b5b5; border-radius: 3px; }
.info i { flex: 1; }
.info i + i { border-left: 1px solid #b5b5b5; }
.roll { flex: 1; min-height: 0; display: grid; grid-template-columns: 68px minmax(0, 1fr) 15px; grid-template-rows: minmax(0, 1fr) 15px; border-top: 1px solid #3c3c3c; }
.rollhead { background: #676767; overflow: hidden; display: flex; flex-direction: column; border-right: 1px solid #333; }
.roll .global { flex: none; }
.keys { flex: 1; min-height: 0; }
.keys text { font: 600 10px "Open Sans", sans-serif; fill: #111; }
.rollmain { display: flex; flex-direction: column; overflow: hidden; background: #585858; }
.roll-ruler .cycle span:not(.start) { width: 222px; padding-left: 0; border: 0; }
.roll-ruler .cycle .start + span { padding-left: 2px; border-left: 1px solid #9dc; }
.roll-ruler .ticks { background:
  linear-gradient(#999, #999) 10px 0 / 1px 100% no-repeat,
  repeating-linear-gradient(90deg, #aaa 0 1px, transparent 1px 222px) 10px 100% / 100% 5px no-repeat,
  linear-gradient(90deg, transparent 55px, #999 55px 56px, transparent 56px 111px, #999 111px 112px, transparent 112px 166px, #999 166px 167px, transparent 167px) 10px 100% / 222px 3px repeat-x; }
.notes { flex: 1; background:
  repeating-linear-gradient(90deg, #3c3c3c 0 1px, transparent 1px 222px) 10px 0 no-repeat,
  linear-gradient(90deg, transparent 55px, #4a4a4a 55px 56px, transparent 56px 111px, #4a4a4a 111px 112px, transparent 112px 166px, #4a4a4a 166px 167px, transparent 167px) 10px 0 / 222px 100%,
  linear-gradient(#656565 8px, #555 8px 16px, #656565 16px 24px, #555 24px 32px, #656565 32px 40px, #555 40px 48px, #656565 48px 56px, #444 56px 57px, #606060 57px 64px, #505050 64px 72px, #606060 72px 80px, #505050 80px 88px, #606060 88px 95px, #2d2d2d 95px) 0 -3px / 100% 96px; }
.roll .foot-left button { width: 31px; height: 14px; border-right: 1px solid #999; background: #d2d2d2; }
.etabs { height: 21px; display: flex; border-top: 1px solid #999; }
.etabs button { width: 80px; border-right: 1px solid #999; box-shadow: inset 1px 0 #ddd; }
.etabs button:first-child { width: 79px; }
.etabs .active { background: #b1b3b8; }

/* library */
.library { width: 358px; flex: none; margin-top: 1px; display: flex; flex-direction: column; }
.ltabs { height: 19px; display: flex; border: 1px solid #999; border-bottom: 0; border-radius: 6px 6px 0 0; background: #b9b9b9; }
.ltabs button { flex: 1; border-right: 1px solid #999; }
.ltabs button:last-child { border: 0; }
.ltabs .active { background: #c9c9c9; border-radius: 5px 5px 0 0; margin-bottom: -2px; box-shadow: inset 0 1px #eee; position: relative; }
.lbody { flex: 1; display: flex; flex-direction: column; background: #c9c9c9; border: 1px solid #999; border-top-color: #eee; border-radius: 6px; box-shadow: 0 1px #888; }
.lsearch { height: 35px; padding: 9px 8px; position: relative; border-bottom: 1px solid #888; }
.lsearch label { position: absolute; left: 11px; top: 12px; }
.lsearch input { display: block; width: 100%; height: 15px; padding-left: 22px; border: 1px solid #666; border-bottom-color: #999; border-radius: 8px; background: #dedede; box-shadow: 0 1px #eee; }
.lsearch input::placeholder { color: #777; opacity: 1; }
.lcols { flex: 1; display: grid; grid-template-columns: 167px 10px 1fr 11px; }
.lcols ul { list-style: none; font: 400 11px/17px "Open Sans", sans-serif; }
.lcols li { display: flex; align-items: center; gap: 2px; height: 18px; padding: 0 6px; }
.flag { margin-left: auto; }
.gutter { border-left: 1px solid #777; background: linear-gradient(90deg, #b8b8b8, #d2d2d2); }
.lstrip { height: 12px; border-top: 1px solid #888; border-bottom: 1px solid #999; background: linear-gradient(#c4c4c4, #d6d6d6); }
.lfoot { height: 33px; display: flex; justify-content: space-between; padding: 8px; }
.gear { width: 35px; height: 15px; gap: 7px; border: 1px solid #888; border-radius: 2px; background: linear-gradient(#eee, #ccc); }
.revert { width: 53px; height: 15px; border: 1px solid #999; border-radius: 8px; color: #666; font-weight: 600; background: linear-gradient(#ccc, #d2d2d2); }

/* transport */
.transport { height: 45px; flex: none; display: flex; align-items: center; padding: 0 20px 0 162px; border: 1px solid #8f8f8f; border-top-color: #eee; border-radius: 6px; background: linear-gradient(#d2d2d2, #aaa); box-shadow: 0 1px #888; }
.pill { flex: none; display: flex; gap: 7px; padding: 3px 2px; border-radius: 16px; background: linear-gradient(#a0a0a0, #c2c2c2); box-shadow: inset 0 1px 1px #888, 0 1px #ccc; }
.pill button { width: 25px; height: 25px; border: 1px solid #777; border-radius: 50%; background: linear-gradient(#d6d6d6, #bcbcbc 50%, #cfcfcf); box-shadow: 0 0 0 1px #999; }
.pill svg { width: 16px; height: 16px; }
.pill .lit { border-color: #1f9a4b; background: radial-gradient(#a8f4bf, #5fdc88); box-shadow: 0 0 2px 1px #3ccf6c; }
.lcd { height: 37px; flex: none; margin: 0 22px 0 23px; display: flex; border: 1px solid #222; border-radius: 6px; background: #3b3b3b; box-shadow: 0 1px #ddd; color: #e4f3f5; font: 400 13px/15px "Liberation Sans", sans-serif; }
.cell { display: grid; align-content: center; justify-items: end; border-left: 1px solid #555; box-shadow: inset 1px 0 #222; white-space: nowrap; }
.cell:first-child { border: 0; box-shadow: none; }
.time { width: 126px; grid-template-columns: 45px 21px 22px 32px; }
.time .full { grid-column: 1 / -1; padding-right: 4px; }
.locs { width: 119px; grid-template-columns: 40px 21px 22px 29px; }
.tempo { width: 71px; padding-right: 8px; }
.sig { width: 49px; padding-right: 9px; }
.sig span:first-child { padding-right: 7px; }
.io { width: 110px; padding-left: 14px; justify-items: start; }
.load { width: 70px; grid-template-columns: 20px 41px; column-gap: 3px; align-items: center; font: 700 7px/15px "DejaVu Sans Mono", monospace; color: #ccc; }
.load i { width: 41px; height: 9px; background: repeating-linear-gradient(90deg, #55554a 0 1px, #2d2d28 1px 2px); }
.load .cpu { background: linear-gradient(#e6e64c, #e6e64c) 4px 0 / 1px 100% no-repeat, repeating-linear-gradient(90deg, #b5cad2 0 1px, #8296a0 1px 2px) 0 0 / 24px 100% no-repeat, repeating-linear-gradient(90deg, #55554a 0 1px, #2d2d28 1px 2px); }
.volume { margin-left: auto; display: flex; align-items: center; gap: 6px; }
.volume input { appearance: none; width: 79px; height: 4px; border: 1px solid #777; border-radius: 3px; background: #c4c4c4; }
.volume input::-webkit-slider-thumb { appearance: none; width: 10px; height: 10px; border: 1px solid #666; border-radius: 50%; background: radial-gradient(#eef1f5, #b8bcc4); }
```
